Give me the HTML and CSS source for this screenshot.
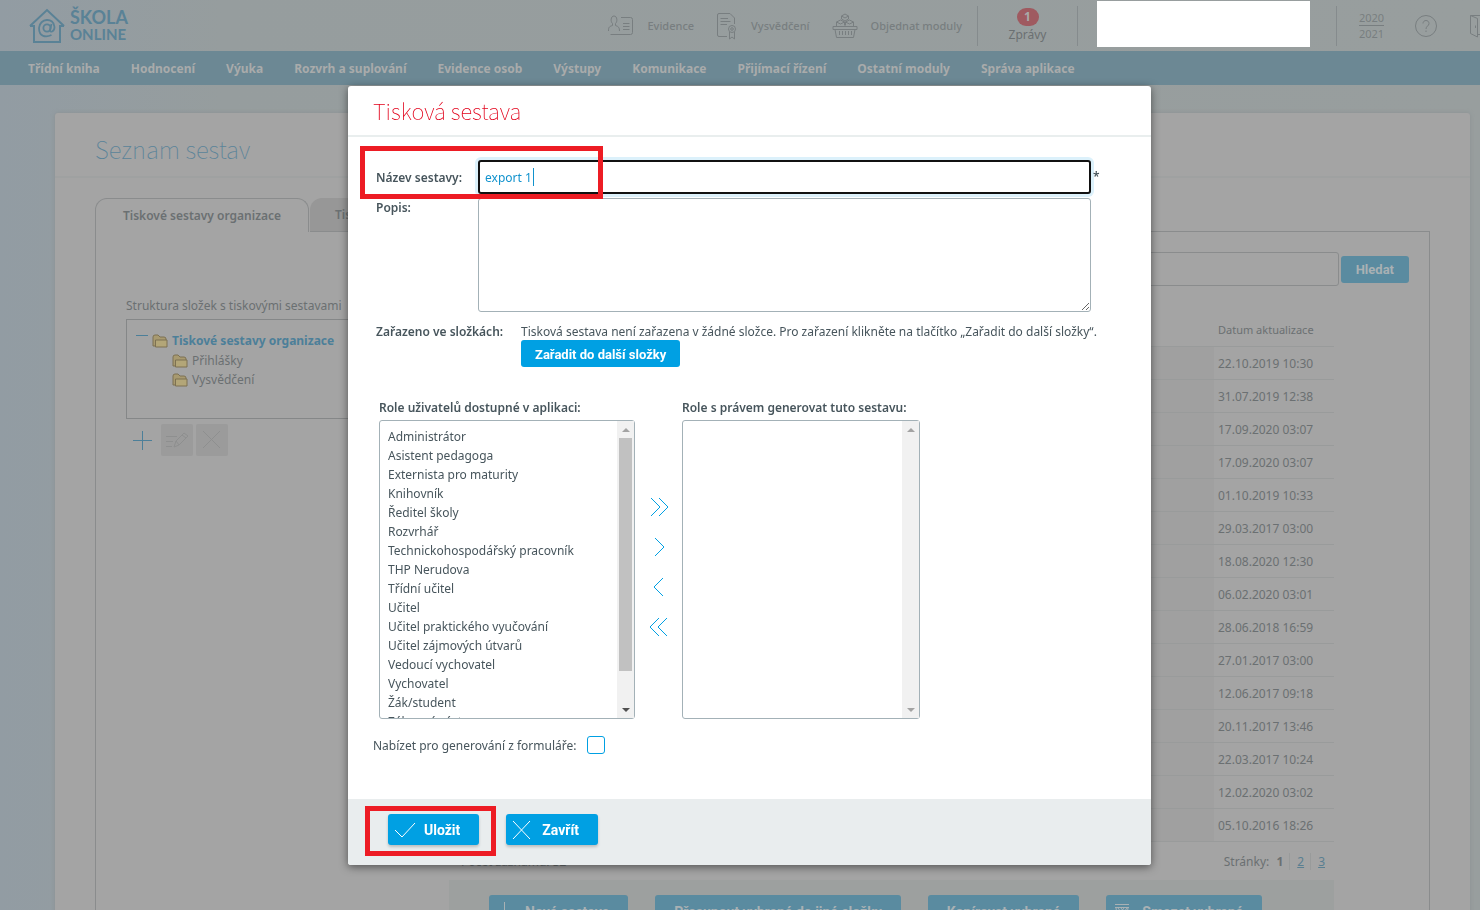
FILE: index.html
```
<!DOCTYPE html>
<html lang="cs">
<head>
  <meta charset="UTF-8">
  <meta name="viewport" content="width=device-width, initial-scale=1.0">
  <title>Škola Online - Tisková sestava</title>
  <link rel="stylesheet" href="styles.css">
</head>
<body>

  <!-- Header -->
  <header class="topbar">
    <a class="logo" href="#">
      <svg width="36" height="36" viewBox="0 0 36 36" fill="none" stroke="currentColor" stroke-width="2">
        <path d="M1 18 L18 2 L35 18 M1 18 H5 M31 18 H35 M5 17 V34 H31 V17"/>
        <circle cx="18" cy="20" r="3.6" stroke-width="1.8"/>
        <path d="M22.5 16 L21 22 C20.8 25 25.5 24 25.5 19 C25 9 10.500 10 10 20 C10 29 17 29.500 22.500 27" stroke-width="1.800"/>
      </svg>
      <span class="logo-text"><span class="logo-top">ŠKOLA</span><span class="logo-bottom">ONLINE</span></span>
    </a>
    <div class="top-links">
      <a class="top-link" href="#">
        <svg width="26" height="22" viewBox="0 0 26 22" fill="none" stroke="currentColor">
          <path d="M13 2.500 H22.500 Q24.500 2.500 24.500 4.500 V17.500 Q24.500 19.500 22.500 19.500 H2.500 M15 8.500 H21.500 M15 11.500 H21.500 M15 14.500 H21.500"/>
          <path d="M6 1 C2.500 1 2.500 7 4.500 8.500 V10.500 C1 11.500 .500 12.500 .500 16 M6 1 C9.500 1 9.500 7 7.500 8.500 V10.500 C10.500 11.500 11.500 12.500 11.500 16"/>
        </svg>
        Evidence
      </a>
      <a class="top-link" href="#">
        <svg width="22" height="28" viewBox="0 0 22 28" fill="none" stroke="currentColor">
          <path d="M11 24.500 H3 Q1.500 24.500 1.500 23 V3 Q1.500 1.500 3 1.500 H14 L18.500 6 V12 M4.500 6.500 H12 M4.500 9.500 H14.500 M4.500 12.500 H11"/>
          <circle cx="16" cy="17" r="3.500"/><circle cx="16" cy="17" r="1.300"/>
          <path d="M13.500 20 V27 L16 25 L18.500 27 V20"/>
        </svg>
        Vysvědčení
      </a>
      <a class="top-link" href="#">
        <svg width="26" height="26" viewBox="0 0 26 26" fill="none" stroke="currentColor">
          <path d="M1 13.500 H25 V16.500 H1 Z M3 16.500 L4.500 24.500 H21.500 L23 16.500 M7.500 18 V22 M10.500 18 V22 M13.500 18 V22 M16.500 18 V22 M19.500 18 V22"/>
          <path d="M13 1 L16.500 3 V6 L13 8 L9.500 6 V3 Z M9.500 3 L13 5 L16.500 3 M8.500 7 L12.500 9 V12.500 M8.500 7 L4.500 9 V13 M4.500 9 L8.500 11 L12.500 9 M17.500 7 L21.500 9 V13 M17.500 7 L13.500 9 V12.500 M13.500 9 L17.500 11 L21.500 9"/>
        </svg>
        Objednat moduly
      </a>
    </div>
    <a class="messages" href="#"><span class="badge">1</span>Zprávy</a>
    <div class="user-box"></div>
    <div class="year"><span>2020</span><span>2021</span></div>
    <a class="help" href="#" aria-label="Nápověda">
      <svg width="24" height="24" viewBox="0 0 24 24" fill="none" stroke="currentColor">
        <circle cx="12" cy="12" r="10.500"/>
        <path d="M9 9.500 C9 5.500 15 5.500 15 9.500 C15 12 12 12 12 15"/><path d="M12 16.500 V18"/>
      </svg>
    </a>
    <a class="logout" href="#" aria-label="Odhlásit">
      <svg width="10" height="24" viewBox="0 0 10 24" fill="none" stroke="currentColor">
        <path d="M.500 1.500 H12 M.500 1.500 L7.500 4.500 V23 L.500 19.500 Z M5.500 11.500 V14 M7.500 20.500 H12"/>
      </svg>
    </a>
  </header>

  <!-- Menu -->
  <nav class="menu">
    <a href="#">Třídní kniha</a>
    <a href="#">Hodnocení</a>
    <a href="#">Výuka</a>
    <a href="#">Rozvrh a suplování</a>
    <a href="#">Evidence osob</a>
    <a href="#">Výstupy</a>
    <a href="#">Komunikace</a>
    <a href="#">Přijímací řízení</a>
    <a href="#">Ostatní moduly</a>
    <a href="#">Správa aplikace</a>
  </nav>

  <!-- Seznam sestav -->
  <main class="panel">
    <h1>Seznam sestav</h1>
    <div class="panel-body">
      <div class="tabs">
        <button class="tab active" type="button">Tiskové sestavy organizace</button>
        <button class="tab" type="button">Tiskové sestavy</button>
        <span class="tabs-line"></span>
      </div>
      <div class="tab-content">
        <section class="folders">
          <p>Struktura složek s tiskovými sestavami</p>
          <ul class="tree">
            <li class="root"><span class="minus"></span><svg class="folder" viewBox="0 0 16 14"><use href="#folder"/></svg>Tiskové sestavy organizace</li>
            <li><svg class="folder" viewBox="0 0 16 14"><use href="#folder"/></svg>Přihlášky</li>
            <li><svg class="folder" viewBox="0 0 16 14"><use href="#folder"/></svg>Vysvědčení</li>
          </ul>
          <div class="tree-tools">
            <button class="add" type="button" aria-label="Přidat"><svg width="20" height="20" viewBox="0 0 20 20" stroke="currentColor"><path d="M10.500 1 V20 M1 10.500 H20"/></svg></button>
            <button type="button" aria-label="Upravit"><svg width="24" height="18" viewBox="0 0 24 18" fill="none" stroke="currentColor"><path d="M1 5.500 H12 M1 10.500 H8 M1 15.500 H7 M9 16 L11 10 L19 2 L23 5 L14 14 Z M17 4 L21 7 M11 10 L14 14"/></svg></button>
            <button type="button" aria-label="Smazat"><svg width="20" height="20" viewBox="0 0 20 20" stroke="currentColor"><path d="M1 1 L18 18 M18 1 L1 18"/></svg></button>
          </div>
        </section>

        <section class="reports">
          <div class="search">
            <input type="text" aria-label="Hledat sestavu">
            <button class="btn" type="button">Hledat</button>
          </div>
          <table>
            <thead>
              <tr><th></th><th>Datum aktualizace</th></tr>
            </thead>
            <tbody>
              <tr><td></td><td>22.10.2019 10:30</td></tr>
              <tr><td></td><td>31.07.2019 12:38</td></tr>
              <tr><td></td><td>17.09.2020 03:07</td></tr>
              <tr><td></td><td>17.09.2020 03:07</td></tr>
              <tr><td></td><td>01.10.2019 10:33</td></tr>
              <tr><td></td><td>29.03.2017 03:00</td></tr>
              <tr><td></td><td>18.08.2020 12:30</td></tr>
              <tr><td></td><td>06.02.2020 03:01</td></tr>
              <tr><td></td><td>28.06.2018 16:59</td></tr>
              <tr><td></td><td>27.01.2017 03:00</td></tr>
              <tr><td></td><td>12.06.2017 09:18</td></tr>
              <tr><td></td><td>20.11.2017 13:46</td></tr>
              <tr><td></td><td>22.03.2017 10:24</td></tr>
              <tr><td></td><td>12.02.2020 03:02</td></tr>
              <tr><td></td><td>05.10.2016 18:26</td></tr>
            </tbody>
          </table>
          <div class="paging">
            <span>Počet záznamů: 32</span>
            <span class="pages">Stránky: <b>1</b><a href="#">2</a><a href="#">3</a></span>
          </div>
          <div class="actions">
            <button class="btn with-icon" type="button"><svg width="16" height="20" viewBox="0 0 16 20" stroke="currentColor"><path d="M7.500 0 V19 M0 9.500 H16"/></svg>Nová sestava</button>
            <button class="btn" type="button">Přesunout vybrané do jiné složky</button>
            <button class="btn" type="button">Kopírovat vybrané</button>
            <button class="btn with-icon" type="button"><svg width="16" height="18" viewBox="0 0 16 18" fill="none" stroke="currentColor"><path d="M1 1.500 H15 M1 4.500 H15 M2 5 L4 17 H12 L14 5 M4 5 L7 9 L10 5 M7 5 L10 9 L13 5"/></svg>Smazat vybrané</button>
          </div>
        </section>
      </div>
    </div>
  </main>

  <!-- Dialog -->
  <div class="overlay">
    <form class="dialog" role="dialog" aria-labelledby="dialog-title">
      <h2 id="dialog-title">Tisková sestava</h2>
      <div class="dialog-body">
        <div class="field name-field">
          <label for="nazev">Název sestavy:</label>
          <input id="nazev" type="text" value="export 1">
          <span class="required">*</span>
          <i class="caret"></i>
          <i class="mark mark-name"></i>
        </div>
        <div class="field">
          <label for="popis">Popis:</label>
          <textarea id="popis"></textarea>
        </div>
        <div class="field placement">
          <span class="label">Zařazeno ve složkách:</span>
          <div>
            <p>Tisková sestava není zařazena v žádné složce. Pro zařazení klikněte na tlačítko „Zařadit do další složky“.</p>
            <button class="btn" type="button">Zařadit do další složky</button>
          </div>
        </div>

        <div class="roles">
          <div class="role-col">
            <label for="role-vse">Role uživatelů dostupné v aplikaci:</label>
            <div class="list">
              <select id="role-vse" multiple>
                <option>Administrátor</option>
                <option>Asistent pedagoga</option>
                <option>Externista pro maturity</option>
                <option>Knihovník</option>
                <option>Ředitel školy</option>
                <option>Rozvrhář</option>
                <option>Technickohospodářský pracovník</option>
                <option>THP Nerudova</option>
                <option>Třídní učitel</option>
                <option>Učitel</option>
                <option>Učitel praktického vyučování</option>
                <option>Učitel zájmových útvarů</option>
                <option>Vedoucí vychovatel</option>
                <option>Vychovatel</option>
                <option>Žák/student</option>
                <option>Zákonný zástupce</option>
              </select>
              <div class="scroll"><i class="up"></i><i class="thumb"></i><i class="down dark"></i></div>
            </div>
          </div>
          <div class="arrows">
            <button type="button" aria-label="Přidat vše"><svg width="20" height="20" viewBox="0 0 20 20"><path d="M1 1 L10 10 L1 19 M9 1 L18 10 L9 19"/></svg></button>
            <button type="button" aria-label="Přidat"><svg width="20" height="20" viewBox="0 0 20 20"><path d="M5 1 L14 10 L5 19"/></svg></button>
            <button type="button" aria-label="Odebrat"><svg width="20" height="20" viewBox="0 0 20 20"><path d="M13 1 L4 10 L13 19"/></svg></button>
            <button type="button" aria-label="Odebrat vše"><svg width="20" height="20" viewBox="0 0 20 20"><path d="M9 1 L0 10 L9 19 M17 1 L8 10 L17 19"/></svg></button>
          </div>
          <div class="role-col right">
            <label for="role-pravo">Role s právem generovat tuto sestavu:</label>
            <div class="list">
              <select id="role-pravo" multiple></select>
              <div class="scroll"><i class="up"></i><i class="down"></i></div>
            </div>
          </div>
        </div>

        <div class="offer">
          <label for="nabizet">Nabízet pro generování z formuláře:</label>
          <input id="nabizet" type="checkbox">
        </div>
      </div>
      <div class="dialog-footer">
        <button class="btn with-icon" type="submit"><svg width="22" height="18" viewBox="0 0 22 18" fill="none" stroke="currentColor"><path d="M1 9 L8 16 L21 2"/></svg>Uložit</button>
        <button class="btn with-icon" type="button"><svg width="22" height="18" viewBox="0 0 22 18" fill="none" stroke="currentColor"><path d="M1 0 L18 18 M18 0 L1 18"/></svg>Zavřít</button>
        <i class="mark mark-save"></i>
      </div>
    </form>
  </div>

  <svg width="0" height="0" class="defs">
    <symbol id="folder" viewBox="0 0 16 14">
      <path d="M1 12 V3 Q1 1 3 1 H6 L8 3 H12 Q14 3 14 5 V12 Z" fill="#a89a70" stroke="#7d7152"/>
      <path d="M3.500 13 V6 H15 V13 Z" fill="#b3a678" stroke="#7d7152"/>
    </symbol>
  </svg>
</body>
</html>
```
FILE: styles.css
```
* {
  box-sizing: border-box;
}

body {
  margin: 0;
  height: 100vh;
  overflow: hidden;
  font-family: "Noto Sans", sans-serif;
  font-size: 12px;
  line-height: 22px;
  color: #6b7072;
  background: linear-gradient(90deg, #929ca3, #969d9e 15%, #989e9e);
}

p, h1, h2, ul {
  margin: 0;
  padding: 0;
  font-weight: 400;
}

a {
  color: inherit;
  text-decoration: none;
}

button, input, textarea, select {
  font: inherit;
  color: inherit;
}

button {
  border: 0;
  padding: 0;
  background: none;
}

svg {
  flex: none;
}

.defs {
  position: absolute;
}

/* Header */
.topbar {
  display: flex;
  align-items: center;
  height: 51px;
  color: #787e80;
}

.logo {
  display: flex;
  align-items: center;
  gap: 5px;
  margin: 0 auto 0 29px;
  color: #5a8296;
}

.logo-text {
  display: flex;
  flex-direction: column;
  font-family: Lato, sans-serif;
  font-size: 18px;
  font-weight: 700;
  line-height: 17px;
}

.logo-bottom {
  font-size: 15px;
}

.top-links {
  display: flex;
  gap: 22px;
  padding-right: 15px;
}

.top-link {
  display: flex;
  align-items: center;
  gap: 13px;
  font-size: 11px;
  font-weight: 500;
}

.messages {
  display: flex;
  flex-direction: column;
  align-items: center;
  justify-content: center;
  width: 101px;
  height: 40px;
  line-height: 18px;
  border: solid #858b8d;
  border-width: 0 1px;
  color: #6b7072;
}

.badge {
  width: 22px;
  border-radius: 9px;
  background: #9f5a60;
  color: #a9a9a9;
  font-weight: 700;
  text-align: center;
}

.user-box {
  width: 213px;
  height: 46px;
  margin: 0 26px 4px 19px;
  background: #fff;
}

.year {
  display: flex;
  flex-direction: column;
  justify-content: center;
  align-items: center;
  width: 70px;
  height: 40px;
  border-left: 1px solid #858b8d;
  font-size: 11px;
  line-height: 15px;
}

.year span:first-child {
  border-bottom: 1px solid;
}

.help, .logout {
  display: flex;
}

.help {
  margin: 0 32px 0 8px;
}

.menu {
  display: flex;
  align-items: center;
  gap: 31px;
  height: 34px;
  padding: 2px 0 0 28px;
  background: #6c8894;
  color: #a9abab;
  font-weight: 700;
  white-space: nowrap;
}

/* Panel */
.panel {
  margin: 28px 10px 0 55px;
  border-radius: 3px;
  background: #a4a4a4;
  box-shadow: 0 0 4px #8b9092;
}

h1, h2 {
  font-family: "Noto Sans CJK SC", "Noto Sans", sans-serif;
}

.panel h1 {
  height: 65px;
  padding-left: 40px;
  border-bottom: 2px solid #9fa1a1;
  font-size: 24px;
  font-weight: 100;
  line-height: 72px;
  color: #5a8399;
}

.panel-body {
  padding: 20px 40px 0;
}

.tabs {
  display: flex;
  height: 34px;
}

.tab {
  padding: 0 25px;
  border: 1px solid #8a8c8d;
  border-width: 0 0 1px;
  border-radius: 12px 12px 0 0;
  background: #979797;
  font-weight: 600;
  margin-left: 1px;
}

.tab.active {
  border-width: 1px 1px 0;
  margin: 0;
  padding: 0;
  width: 214px;
  background: none;
}

.tabs-line {
  flex: 1;
  border-bottom: 1px solid #8a8c8d;
}

.tab-content {
  display: flex;
  gap: 28px;
  padding: 20px 20px 0 30px;
  border: solid #8a8c8d;
  border-width: 0 1px;
}

.folders {
  width: 295px;
  padding-top: 43px;
}

.tree {
  height: 100px;
  margin-top: 2px;
  padding: 11px 9px;
  border: 1px solid #858788;
  list-style: none;
}

.tree li {
  display: flex;
  align-items: center;
  gap: 4px;
  height: 19px;
  padding-left: 36px;
}

.tree .root {
  height: 20px;
  padding: 0;
  font-weight: 700;
  color: #4c7f99;
}

.minus {
  width: 12px;
  height: 12px;
  border-top: 1px solid;
}

.folder {
  width: 16px;
  height: 14px;
}

.tree-tools {
  display: flex;
  gap: 3px;
  padding-top: 5px;
}

.tree-tools button {
  display: flex;
  align-items: center;
  justify-content: center;
  width: 32px;
  height: 32px;
  border-radius: 2px;
  background: #9b9b9b;
  color: #8e8f8f;
}

.tree-tools button.add {
  background: none;
  color: #4c7f99;
}

.reports {
  flex: 1;
}

.search {
  display: flex;
  align-items: center;
  gap: 2px;
  height: 34px;
}

.search input {
  flex: 1;
  height: 34px;
  border: 1px solid #8a8c8d;
  border-radius: 3px;
  background: none;
}

.btn {
  height: 27px;
  padding: 2px 14px 0;
  border-radius: 3px;
  background: #00a0e3;
  color: #fff;
  font-family: Roboto, "Liberation Sans", sans-serif;
  font-size: 13px;
  font-weight: 700;
  line-height: 20px;
  white-space: nowrap;
}

.search .btn {
  padding: 1px 15px 0;
}

.with-icon {
  display: flex;
  align-items: center;
  gap: 8px;
  padding: 0 19px 0 6px;
}

.reports .btn {
  background: #5a8ba0;
  color: #a9b1b4;
}

.reports table {
  width: calc(100% - 75px);
  margin-top: 27px;
  border-collapse: collapse;
}

.reports th, .reports td {
  height: 33px;
  padding: 2px 4px 0;
  border-bottom: 1px solid #999b9b;
  text-align: left;
  font-weight: 400;
}

.reports th {
  font-size: 11px;
}

.reports td:first-child {
  background: #a0a0a0;
}

.reports th:last-child, .reports td:last-child {
  width: 120px;
}

.paging {
  display: flex;
  justify-content: space-between;
  width: calc(100% - 75px);
  padding: 9px 9px 7px 12px;
}

.pages a {
  padding-left: 7px;
  border-left: 1px solid #999b9b;
  margin-left: 6px;
  text-decoration: underline;
  color: #5a7f91;
}

.pages b {
  margin-left: 4px;
}

.actions {
  display: flex;
  gap: 27px;
  width: calc(100% - 75px);
  height: 66px;
  padding: 15px 40px;
  background: #9da09f;
}

.actions .btn {
  height: 34px;
  padding: 0 19px;
  font-size: 14px;
}

.actions .with-icon {
  padding-left: 8px;
  gap: 12px;
}

/* Dialog */
.overlay {
  position: fixed;
  inset: 0;
  display: flex;
  justify-content: center;
  align-items: flex-start;
  padding: 86px 0 0 19px;
}

.dialog {
  width: 803px;
  border-radius: 3px;
  background: #fff;
  color: #47555c;
  box-shadow: 0 2px 8px rgba(0, 0, 0, 0.5);
}

.dialog h2 {
  height: 51px;
  padding-left: 25px;
  border-bottom: 2px solid #e9eeee;
  font-size: 22px;
  font-weight: 100;
  line-height: 48px;
  color: #e2001a;
}

.dialog-body {
  padding: 23px 28px 42px;
}

.field {
  display: flex;
  align-items: flex-start;
}

.field label, .field .label {
  width: 102px;
  font-weight: 600;
}

.field label {
  line-height: 20px;
}

.field input, .field textarea {
  width: 613px;
  border: 1px solid #a3b1b7;
  border-radius: 3px;
  background: #fff;
}

.name-field {
  position: relative;
  align-items: center;
  margin-bottom: 4px;
}

.name-field label {
  padding-top: 2px;
}

.field input {
  height: 34px;
  padding: 0 5px;
  border: 2px solid #111;
  box-shadow: 0 0 0 3px #dcf1fb;
  outline: none;
  color: #1192cd;
}

.caret {
  position: absolute;
  left: 157px;
  top: 8px;
  width: 1px;
  height: 18px;
  background: #1192cd;
}

.required {
  padding-left: 2px;
  font-weight: 600;
}

.mark {
  position: absolute;
  border: 5px solid #ed1c24;
  pointer-events: none;
}

.mark-name {
  left: -16px;
  top: -14px;
  width: 243px;
  height: 53px;
}

.field textarea {
  height: 114px;
}

.placement {
  padding-top: 9px;
}

.field.placement .label {
  width: 145px;
}

.placement p {
  white-space: nowrap;
}

.placement .btn {
  display: block;
  margin-top: -3px;
}

.roles {
  display: flex;
  padding: 30px 3px 0;
}

.role-col {
  width: 256px;
}

.role-col.right {
  width: 238px;
}

.role-col label {
  display: block;
  margin-bottom: 1px;
  font-weight: 600;
  white-space: nowrap;
}

.list {
  position: relative;
  height: 299px;
}

.list select {
  display: block;
  width: 100%;
  height: 100%;
  padding: 7px 0 0;
  border: 1px solid #a3b1b7;
  border-radius: 3px;
  background: #fff;
  overflow: hidden;
  scrollbar-width: none;
}

.list option {
  height: 19px;
  min-height: 19px;
  padding: 0 8px;
  line-height: 19px;
}

.scroll {
  position: absolute;
  inset: 1px 1px 1px auto;
  display: flex;
  flex-direction: column;
  align-items: center;
  width: 17px;
  padding: 7px 0 6px;
  background: #f1f1f1;
}

.up, .down {
  border: 4px solid transparent;
  border-top: 0;
  border-bottom-color: #a3a3a3;
}

.down {
  margin-top: auto;
  border-top: 4px solid #a3a3a3;
  border-bottom: 0;
}

.down.dark {
  border-top-color: #505050;
}

.thumb {
  width: 13px;
  height: 233px;
  margin-top: 6px;
  background: #c1c1c1;
}

.arrows {
  display: flex;
  flex-direction: column;
  gap: 20px;
  width: 47px;
  padding: 100px 0 0 15px;
}

.arrows button {
  display: flex;
}

.arrows svg {
  fill: none;
  stroke: #00a0e3;
}

.offer {
  display: flex;
  align-items: center;
  gap: 11px;
  padding-top: 14px;
  margin-left: -3px;
}

.offer label {
  padding-top: 2px;
}

.offer input {
  appearance: none;
  width: 18px;
  height: 18px;
  margin: 0;
  border: 1px solid #00a0e3;
  border-radius: 3px;
}

.dialog-footer {
  position: relative;
  display: flex;
  gap: 27px;
  height: 66px;
  padding: 15px 40px;
  border-radius: 0 0 3px 3px;
  background: #e9edee;
}

.dialog-footer .btn {
  height: 31px;
  font-size: 14px;
  box-shadow: 0 2px 3px rgba(0, 0, 0, 0.2);
}

.mark-save {
  left: 17px;
  top: 7px;
  width: 131px;
  height: 50px;
}
```
